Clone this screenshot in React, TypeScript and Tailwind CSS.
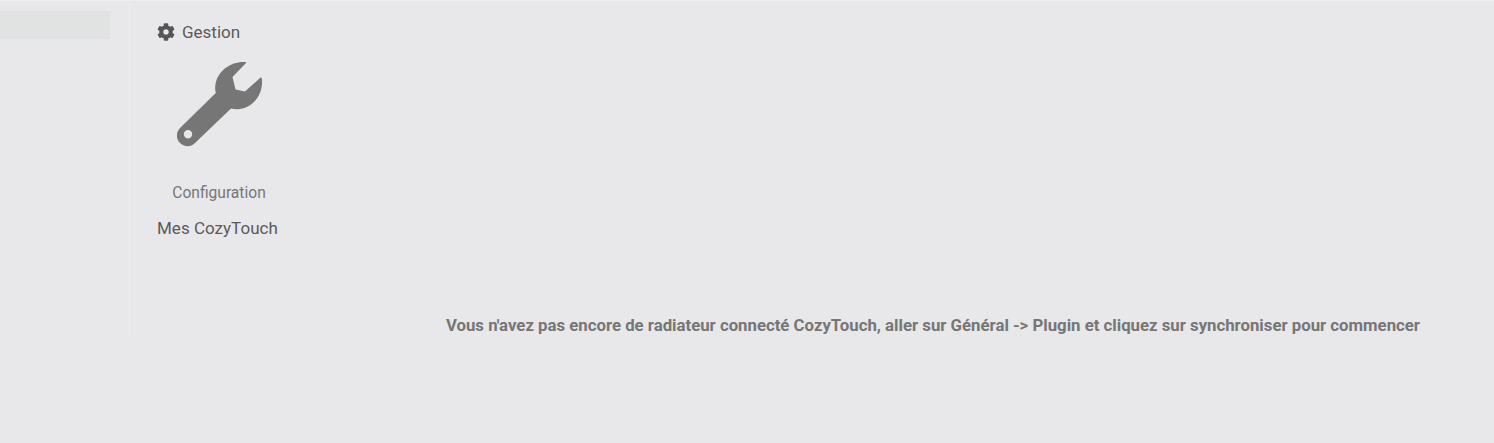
import { FaCog } from "react-icons/fa";

function Wrench() {
  return (
    <svg width="88" height="88" viewBox="0 0 88 88" className="block">
      <path
        fill="#767676"
        fillRule="evenodd"
        d="M68.5 3.5 C69.5 2.8 69.5 2 68 2 C55 1 41 10 38.5 24 C38 27 38 30 38.8 33 L3.5 67.5 C-1.5 72.5 -1 79 3 83 C7 87 13.5 87.5 18 83 L54 48.5 C57 49.2 60 49.5 63 49 C75 47.5 86 36 85 20 C85 17.5 83.8 17 83 18 L68 31.5 L58.5 29.5 L55.5 17 Z M11 78.5 A4.2 4.2 0 1 0 11 70.1 A4.2 4.2 0 1 0 11 78.5 Z"
      />
    </svg>
  );
}

export default function App() {
  return (
    <div className="h-[443px] overflow-hidden bg-[#e8e8ea] border-t border-[#efeff0] font-['Roboto',sans-serif]">
      <div className="flex h-[335px] pt-[2px]">
        <div className="w-[129px] shrink-0 pt-2">
          <div className="h-7 w-[110px] bg-[#e1e2e2]" />
        </div>
        <div className="flex-1 border-l border-[#eeeeef] pl-[27px] pr-[74px] flex flex-col">
          <div className="mt-[20px] flex items-center gap-[7px] h-[18px] text-[17px] leading-[18px] text-[#5a5a5a]">
            <FaCog className="text-[18px] text-[#555555]" />
            <span>Gestion</span>
          </div>
          <div className="w-[124px] mt-[19px] flex flex-col items-center">
            <div className="ml-[4px]"><Wrench /></div>
            <div className="mt-[36px] text-[15.6px] leading-[18px] text-[#767676]">Configuration</div>
          </div>
          <div className="mt-[16px] text-[17.05px] leading-[20px] text-[#5a5a5a]">Mes CozyTouch</div>
          <div className="mb-[1px] mt-auto text-right text-[16.78px] leading-5 font-bold text-[#767676]">
            Vous n'avez pas encore de radiateur connecté CozyTouch, aller sur Général -&gt; Plugin et cliquez sur synchroniser pour commencer
          </div>
        </div>
      </div>
    </div>
  );
}
